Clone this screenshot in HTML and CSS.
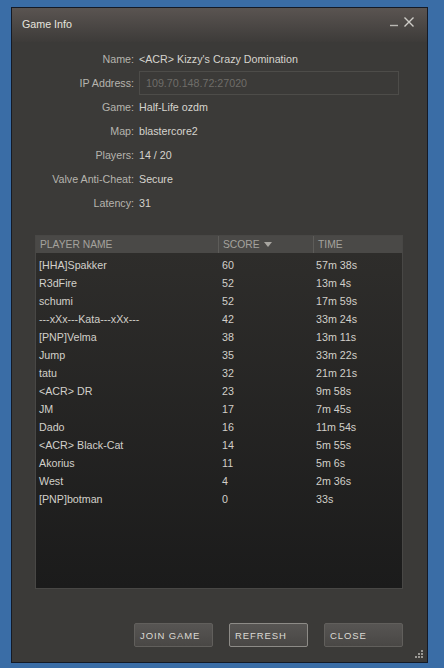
FILE: index.html
```html
<!DOCTYPE html>
<html lang="en">
<head>
  <meta charset="UTF-8" />
  <title>Game Info</title>
  <link rel="stylesheet" href="styles.css">
</head>
<body>
  <div class="window">
    <div class="titlebar">
      <span class="title">Game Info</span>
      <div class="controls">
        <svg class="ctl" width="10" height="12" viewBox="0 0 10 12"><path d="M1 9.5h8" stroke="#b9b7b2" stroke-width="1.4"/></svg>
        <svg class="ctl" width="12" height="12" viewBox="0 0 12 12"><path d="M1.5 1.5l9 9M10.5 1.5l-9 9" stroke="#cfcdc8" stroke-width="1.4"/></svg>
      </div>
    </div>

    <div class="info">
      <span class="label">Name:</span><span class="value">&lt;ACR&gt; Kizzy's Crazy Domination</span>
      <span class="label">IP Address:</span><span class="value"><span class="ipbox">109.70.148.72:27020</span></span>
      <span class="label">Game:</span><span class="value">Half-Life ozdm</span>
      <span class="label">Map:</span><span class="value">blastercore2</span>
      <span class="label">Players:</span><span class="value">14 / 20</span>
      <span class="label">Valve Anti-Cheat:</span><span class="value">Secure</span>
      <span class="label">Latency:</span><span class="value">31</span>
    </div>

    <div class="players">
      <div class="thead">
        <span>PLAYER NAME</span>
        <span>SCORE <svg width="8" height="5" viewBox="0 0 8 5"><path d="M0 0h8L4 5z" fill="#a8a6a1"/></svg></span>
        <span>TIME</span>
      </div>
      <div class="tbody">
        <div class="row"><span>[HHA]Spakker</span><span>60</span><span>57m 38s</span></div>
        <div class="row"><span>R3dFire</span><span>52</span><span>13m 4s</span></div>
        <div class="row"><span>schumi</span><span>52</span><span>17m 59s</span></div>
        <div class="row"><span>---xXx---Kata---xXx---</span><span>42</span><span>33m 24s</span></div>
        <div class="row"><span>[PNP]Velma</span><span>38</span><span>13m 11s</span></div>
        <div class="row"><span>Jump</span><span>35</span><span>33m 22s</span></div>
        <div class="row"><span>tatu</span><span>32</span><span>21m 21s</span></div>
        <div class="row"><span>&lt;ACR&gt; DR</span><span>23</span><span>9m 58s</span></div>
        <div class="row"><span>JM</span><span>17</span><span>7m 45s</span></div>
        <div class="row"><span>Dado</span><span>16</span><span>11m 54s</span></div>
        <div class="row"><span>&lt;ACR&gt; Black-Cat</span><span>14</span><span>5m 55s</span></div>
        <div class="row"><span>Akorius</span><span>11</span><span>5m 6s</span></div>
        <div class="row"><span>West</span><span>4</span><span>2m 36s</span></div>
        <div class="row"><span>[PNP]botman</span><span>0</span><span>33s</span></div>
      </div>
    </div>

    <div class="buttons">
      <button>JOIN GAME</button>
      <button class="focused">REFRESH</button>
      <button>CLOSE</button>
    </div>

    <svg class="grip" width="8" height="8" viewBox="0 0 8 8">
      <rect x="6" y="0" width="2" height="2" fill="#9a9894"/>
      <rect x="3" y="3" width="2" height="2" fill="#9a9894"/>
      <rect x="6" y="3" width="2" height="2" fill="#9a9894"/>
      <rect x="0" y="6" width="2" height="2" fill="#9a9894"/>
      <rect x="3" y="6" width="2" height="2" fill="#9a9894"/>
      <rect x="6" y="6" width="2" height="2" fill="#9a9894"/>
    </svg>
  </div>
</body>
</html>
```

FILE: styles.css
```css
body {
  margin: 0;
  background-color: #3a6da6;
  font-family: 'Liberation Sans', Arial, sans-serif;
  font-size: 10.7px;
}
.window {
  position: relative;
  box-sizing: border-box;
  width: 417px;
  height: 656px;
  margin: 7px 0 0 11px;
  border: 1px solid #141a26;
  background-color: #3b3a38;
  display: flex;
  flex-direction: column;
}
.titlebar {
  height: 34px;
  flex-shrink: 0;
  display: flex;
  align-items: center;
  justify-content: space-between;
  padding: 0 12px 0 10px;
  background: linear-gradient(#5a5451, #3d3b39);
}
.title {
  color: #e6e4de;
  margin-top: -3px;
}
.controls {
  display: flex;
  align-items: center;
  gap: 4px;
  margin-top: -6px;
}
.info {
  display: grid;
  grid-template-columns: 122px 1fr;
  grid-auto-rows: 24px;
  column-gap: 5px;
  padding: 5px 28px 0 0;
  align-items: center;
}
.label {
  text-align: right;
  color: #b6b4ae;
}
.value {
  color: #d6d4ce;
}
.ipbox {
  display: block;
  box-sizing: border-box;
  height: 24px;
  line-height: 22px;
  padding-left: 6px;
  border: 1px solid #4d4c49;
  color: #6f6d69;
}
.players {
  margin: 20px 24px 0 23px;
  height: 354px;
  box-sizing: border-box;
  border: 1px solid #484745;
  display: flex;
  flex-direction: column;
}
.thead,
.row {
  display: grid;
  grid-template-columns: 182px 95px 1fr;
}
.thead {
  height: 17px;
  background-color: #4a4947;
  color: #a4a29d;
  font-size: 10.3px;
  line-height: 17px;
}
.thead span {
  padding-left: 4px;
  border-left: 1px solid #5d5c59;
}
.thead span:first-child {
  border-left: none;
}
.thead svg {
  margin-left: 2px;
  vertical-align: 1px;
}
.tbody {
  flex: 1;
  padding-top: 3px;
  background: linear-gradient(#2e2d2b, #1b1b1b);
}
.row {
  height: 18px;
  line-height: 18px;
  color: #d2d0ca;
}
.row span {
  padding-left: 3px;
}
.row span:nth-child(2) {
  padding-left: 4px;
}
.buttons {
  margin-top: auto;
  margin-bottom: 15px;
  display: flex;
  justify-content: flex-end;
  gap: 16px;
  padding-right: 24px;
}
.buttons button {
  width: 79px;
  height: 24px;
  padding: 0 0 0 5px;
  text-align: left;
  font-family: 'Liberation Sans', Arial, sans-serif;
  font-size: 9.5px;
  letter-spacing: 0.9px;
  color: #dcdad4;
  background: linear-gradient(#575553, #494745);
  border: 1px solid #615f5c;
  border-radius: 2px;
}
.buttons button.focused {
  border-color: #8d8b87;
}
.grip {
  position: absolute;
  right: 4px;
  bottom: 4px;
}
```
